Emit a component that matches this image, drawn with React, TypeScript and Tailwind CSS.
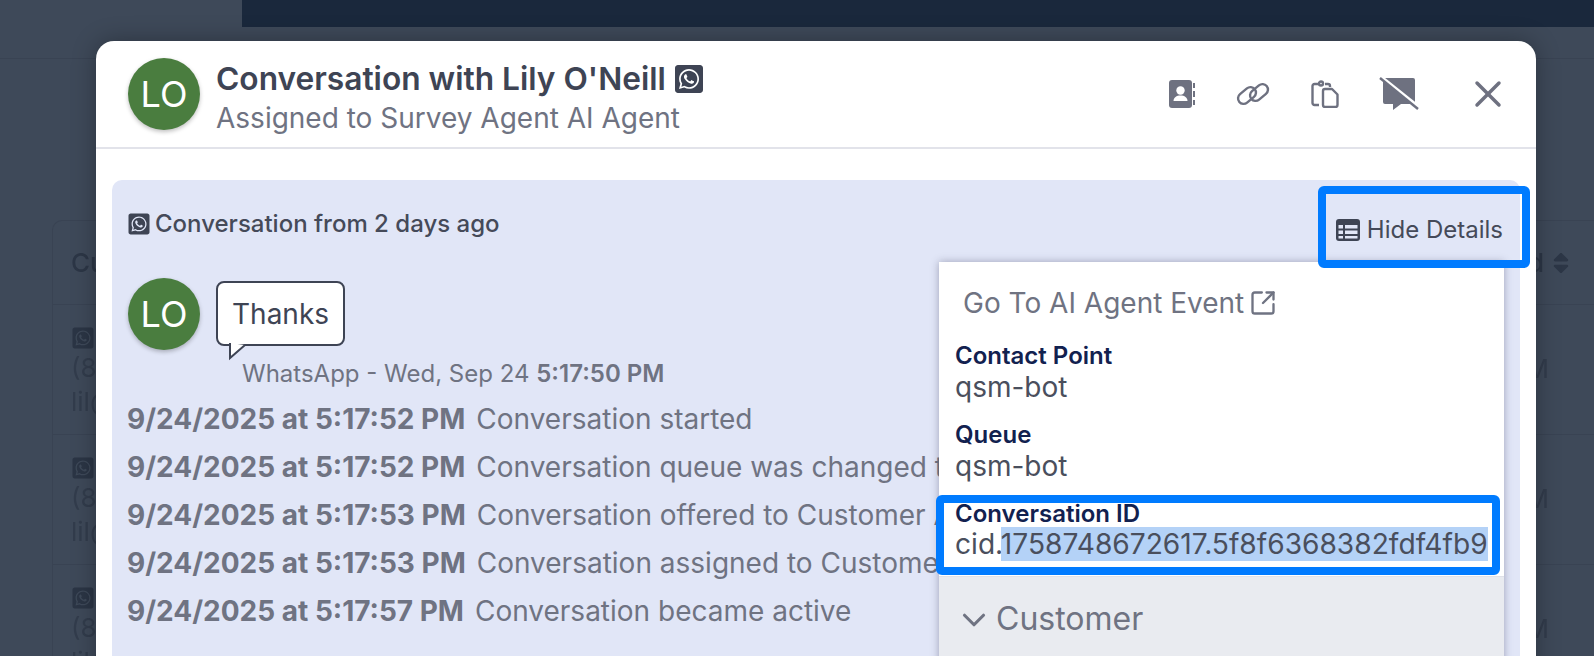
import React from 'react';
import { ChevronDown, SquareArrowOutUpRight, X } from 'lucide-react';
import { FaSort, FaWhatsappSquare } from 'react-icons/fa';

const events = [
  { time: '9/24/2025 at 5:17:52 PM', text: 'Conversation started' },
  { time: '9/24/2025 at 5:17:52 PM', text: 'Conversation queue was changed to qsm-bot' },
  { time: '9/24/2025 at 5:17:53 PM', text: 'Conversation offered to Customer Agent' },
  { time: '9/24/2025 at 5:17:53 PM', text: 'Conversation assigned to Customer Agent' },
  { time: '9/24/2025 at 5:17:57 PM', text: 'Conversation became active' },
];

const Avatar = () => (
  <div className="flex h-[72px] w-[72px] shrink-0 items-center justify-center rounded-full bg-[#4a7d3f] text-[36px] text-white shadow-[0_2px_4px_rgba(0,0,0,0.25)]">
    LO
  </div>
);

const AddressBookIcon = () => (
  <svg width="26" height="28" viewBox="0 0 26 28">
    <rect x="0" y="0" width="23" height="28" rx="3" fill="#6e7180" />
    <circle cx="11.5" cy="10.5" r="4.2" fill="#ffffff" />
    <path d="M4.5 21c0-3.5 3-5.5 7-5.5s7 2 7 5.5z" fill="#ffffff" />
    <path d="M25 3v5M25 11v6M25 20v5" stroke="#6e7180" strokeWidth="2" />
  </svg>
);

const LinkIcon = () => (
  <svg width="34" height="28" viewBox="0 0 34 28" fill="none" stroke="#6e7180" strokeWidth="2.4">
    <rect x="1" y="10" width="20" height="11" rx="5.5" transform="rotate(-40 11 15.5)" />
    <rect x="13" y="7" width="20" height="11" rx="5.5" transform="rotate(-40 23 12.5)" />
  </svg>
);

const ClipboardIcon = () => (
  <svg width="28" height="28" viewBox="0 0 28 28" fill="none" stroke="#6e7180" strokeWidth="2.4" strokeLinejoin="round">
    <path d="M8 25H3.5a2 2 0 0 1-2-2V6a2 2 0 0 1 2-2H7M14 4h3a2 2 0 0 1 2 2v1" />
    <circle cx="10" cy="3.5" r="2" />
    <path d="M14 9h7l5.5 5.5V25a2 2 0 0 1-2 2H14a2 2 0 0 1-2-2V11a2 2 0 0 1 2-2z" />
  </svg>
);

const MessageOffIcon = () => (
  <svg width="40" height="34" viewBox="0 0 40 34">
    <path d="M7 1h27a2 2 0 0 1 2 2v22a2 2 0 0 1-2 2H22l-8 6v-6H6a2 2 0 0 1-2-2V3a2 2 0 0 1 2-2z" fill="#6e7180" />
    <path d="M0 -2 40 30" stroke="#ffffff" strokeWidth="3" />
    <path d="M1 1 39 32" stroke="#6e7180" strokeWidth="2.4" />
  </svg>
);

const TableIcon = () => (
  <svg width="24" height="22" viewBox="0 0 24 22">
    <rect width="24" height="22" rx="3" fill="#3e4454" />
    <path d="M2.5 6h4.5v3.5H2.5zM9 6h12.5v3.5H9zM2.5 11.5h4.5V15H2.5zM9 11.5h12.5V15H9zM2.5 17h4.5v2.5H2.5zM9 17h12.5v2.5H9z" fill="#e1e6f7" />
  </svg>
);

const BackgroundRow = () => (
  <div className="flex h-[130px] items-start justify-between border-t border-[#394353] px-[18px] pt-[21px] text-[26px] leading-[34px] text-[#323c4c]">
    <div>
      <FaWhatsappSquare className="h-[24px] w-[24px] text-[#2b3545]" />
      <div className="mt-px">(8</div>
      <div>lil@</div>
    </div>
    <div className="pt-[26px] pr-[27px]">M</div>
  </div>
);

export default function App() {
  return (
    <div className="relative h-[656px] w-[1594px] overflow-hidden bg-[#3e4959] font-['Inter',sans-serif]">
      {/* page behind the modal */}
      <div className="h-[59px] border-b border-[#394353]">
        <div className="ml-[242px] h-[27px] bg-[#1a283c]" />
      </div>
      <div className="ml-[52px] mt-[161px] rounded-tl-[10px] border-l border-t border-[#394353] blur-[0.5px]">
        <div className="flex h-[83px] items-center justify-between pl-[18px] pr-[20px] text-[26px] font-medium text-[#2c3646]">
          <span>Cu</span>
          <span className="flex items-center gap-[4px]">
            d
            <FaSort className="h-[26px] w-[26px]" />
          </span>
        </div>
        <BackgroundRow />
        <BackgroundRow />
        <BackgroundRow />
      </div>

      {/* modal */}
      <div className="absolute left-[96px] top-[41px] h-[640px] w-[1440px] overflow-hidden rounded-t-[18px] bg-white shadow-[0_0_24px_rgba(0,0,0,0.3)]">
        <div className="flex h-[108px] items-center border-b-2 border-[#e2e3ea] pl-[32px] pr-[26px]">
          <Avatar />
          <div className="ml-[16px] mt-[8px] flex-1">
            <div className="flex items-center gap-[7px] pt-[2px] text-[31.7px] font-semibold leading-[38px] text-[#3e4454]">
              Conversation with Lily O'Neill
              <FaWhatsappSquare className="h-[32px] w-[32px]" />
            </div>
            <div className="text-[28px] leading-[40px] text-[#6f7382]">Assigned to Survey Agent AI Agent</div>
          </div>
          <div className="flex items-center">
            <AddressBookIcon />
            <div className="ml-[41px]"><LinkIcon /></div>
            <div className="ml-[41px]"><ClipboardIcon /></div>
            <div className="ml-[40px]"><MessageOffIcon /></div>
            <X className="ml-[47px] h-[44px] w-[44px] text-[#6e7180]" strokeWidth={1.9} />
          </div>
        </div>

        <div className="mx-[16px] mt-[31px] h-[520px] rounded-t-[10px] bg-[#e1e6f7]">
          <div className="flex items-start justify-between pl-[16px] pr-[16px]">
            <div className="mt-[32px] flex items-center gap-[4px] text-[24px] font-medium leading-[24px] text-[#454a59]">
              <FaWhatsappSquare className="ml-[-1px] h-[24px] w-[24px] text-[#3e4454]" />
              Conversation from 2 days ago
            </div>
            <div className="flex h-[82px] w-[200px] items-center justify-end pr-px pt-[18px] text-[24px] text-[#454a59]">
              <span className="mr-[7px]"><TableIcon /></span>
              Hide Details
            </div>
          </div>

          <div className="relative">
            <div className="absolute left-[16px] top-[16px]">
              <div className="flex items-start">
                <Avatar />
                <div className="relative ml-[16px] mt-[3px] rounded-[8px] border-2 border-[#3e4454] bg-white px-[14px] pb-[10px] pt-[12px] text-[28px] leading-[39px] text-[#3e4454]">
                  Thanks
                  <svg className="absolute left-[10px] top-[60px]" width="20" height="18" viewBox="0 0 20 18">
                    <path d="M2 0v15L17 2" fill="#ffffff" stroke="#3e4454" strokeWidth="2" />
                  </svg>
                </div>
              </div>
              <div className="ml-[114px] mt-[9px] text-[24px] leading-[30px] text-[#6f7382]">
                WhatsApp - Wed, Sep 24 <span className="font-semibold">5:17:50 PM</span>
              </div>
              <div className="ml-[-1px] mt-[6px] w-[812px] overflow-hidden">
                {events.map((e, i) => (
                  <div key={i} className="flex h-[48px] items-center whitespace-nowrap text-[28px] text-[#6f7382]">
                    <span className="mr-[11px] font-bold">{e.time}</span>
                    {e.text}
                  </div>
                ))}
              </div>
            </div>

            {/* details card */}
            <div className="absolute right-[16px] top-0 w-[565px] bg-white shadow-[0_0_8px_rgba(60,60,90,0.4)]">
              <div className="flex items-center px-[24px] pt-[23px] text-[28px] leading-[36px] text-[#6f7382]">
                Go To AI Agent Event
                <SquareArrowOutUpRight className="ml-[5px] h-[28px] w-[28px]" strokeWidth={2} />
              </div>
              <div className="px-[16px] pt-[20px] text-[24px]">
                <div className="font-semibold leading-[30px] text-[#12214f]">Contact Point</div>
                <div className="text-[28px] leading-[32px] text-[#4a4f5d]">qsm-bot</div>
                <div className="mt-[17px] font-semibold leading-[30px] text-[#12214f]">Queue</div>
                <div className="text-[28px] leading-[32px] text-[#4a4f5d]">qsm-bot</div>
              </div>
              <div className="relative mt-[13px] h-[81px] px-[16px] pt-[6px]">
                <div className="text-[24px] font-semibold leading-[26px] text-[#12214f]">Conversation ID</div>
                <div className="whitespace-nowrap text-[28.15px] leading-[35px] text-[#4a4f5d]">
                  cid.<span className="bg-[#b4d2f7]">1758748672617.5f8f6368382fdf4fb9</span>
                </div>
                <div className="absolute left-[-3px] right-[4px] top-0 h-[80px] rounded-[6px] border-[8px] border-[#007bff]" />
              </div>
              <div className="flex h-[120px] items-start border-t border-[#dfe1e8] bg-[#e9ebf0] pl-[16px] pt-[22px] text-[32px] leading-[40px] text-[#6f7382]">
                <ChevronDown className="mr-[3px] mt-[2px] h-[38px] w-[38px]" strokeWidth={2} />
                Customer
              </div>
            </div>
          </div>
        </div>

        {/* Hide Details highlight */}
        <div className="absolute left-[1222px] top-[145px] h-[82px] w-[212px] rounded-[6px] border-[8px] border-[#007bff]" />
      </div>
    </div>
  );
}
